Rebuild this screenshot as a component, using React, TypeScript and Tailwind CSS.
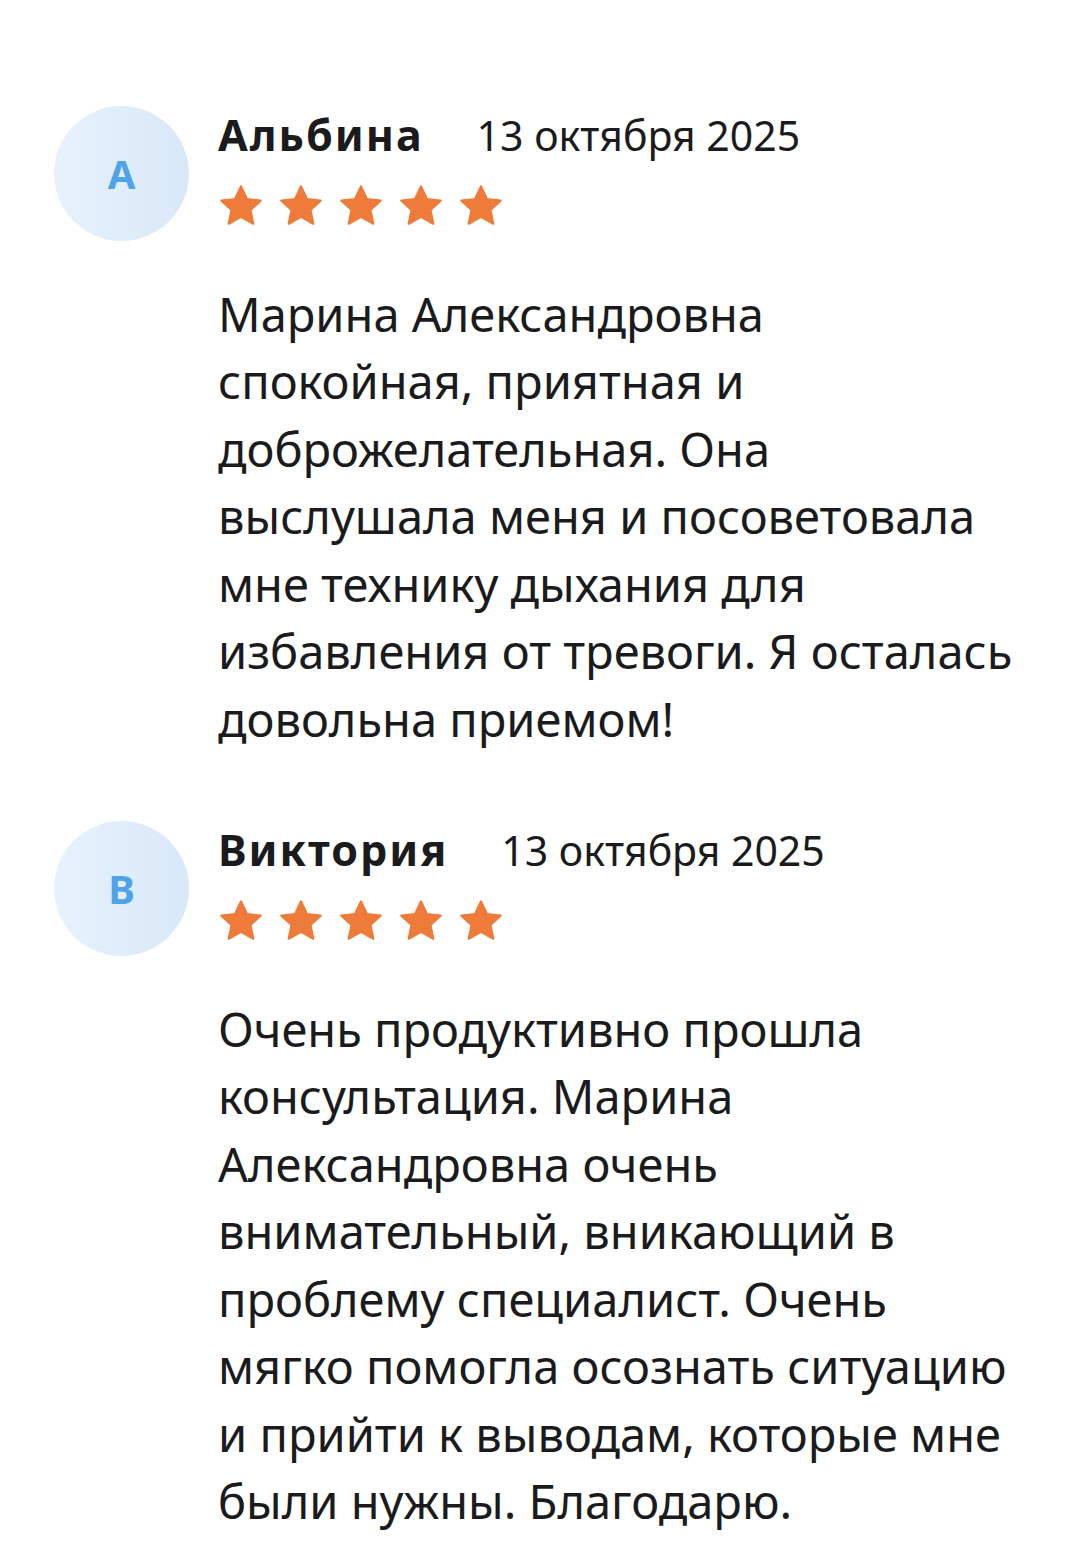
import React from "react"

interface Review {
  initial: string
  name: string
  date: string
  text: string
}

const reviews: Review[] = [
  {
    initial: "А",
    name: "Альбина",
    date: "13 октября 2025",
    text: "Марина Александровна спокойная, приятная и доброжелательная. Она выслушала меня и посоветовала мне технику дыхания для избавления от тревоги. Я осталась довольна приемом!",
  },
  {
    initial: "В",
    name: "Виктория",
    date: "13 октября 2025",
    text: "Очень продуктивно прошла консультация. Марина Александровна очень внимательный, вникающий в проблему специалист. Очень мягко помогла осознать ситуацию и прийти к выводам, которые мне были нужны. Благодарю.",
  },
]

function Star() {
  return (
    <svg viewBox="0 0 24 24" className="h-[46px] w-[46px]" aria-hidden>
      <path
        d="M12 1.8l3.05 6.6 7.2.8-5.35 4.9 1.5 7.1L12 17.6l-6.4 3.6 1.5-7.1L1.75 9.2l7.2-.8z"
        fill="#ee7b3a"
        stroke="#ee7b3a"
        strokeWidth="1.2"
        strokeLinejoin="round"
      />
    </svg>
  )
}

function ReviewItem({ r }: { r: Review }) {
  return (
    <div className="flex gap-[29px]">
      <div className="flex h-[135px] w-[135px] shrink-0 items-center justify-center rounded-full bg-gradient-to-r from-[#e7f2fc] to-[#d9e8f8]">
        <span className="text-[40px] font-bold leading-none text-[#4fa3e8]">{r.initial}</span>
      </div>
      <div className="min-w-0 flex-1">
        <div className="flex items-baseline gap-[53px] leading-[1.362]">
          <span className="text-[43px] font-bold tracking-[2px] text-[#1b1b1d]">{r.name}</span>
          <span className="text-[41px] text-[#1b1b1d]">{r.date}</span>
        </div>
        <div className="mt-[18px] flex gap-[14px]">
          {Array.from({ length: 5 }).map((_, i) => (
            <Star key={i} />
          ))}
        </div>
        <p className="mt-[52px] text-[47px] leading-[67.5px] text-[#1b1b1d]">{r.text}</p>
      </div>
    </div>
  )
}

export default function App() {
  return (
    <div className="min-h-[1564px] bg-white pl-[54px] pr-[52px] pt-[106px] font-[family-name:'Noto_Sans',sans-serif]">
      <div className="flex flex-col gap-[68px]">
        {reviews.map((r) => (
          <ReviewItem key={r.name} r={r} />
        ))}
      </div>
    </div>
  )
}
